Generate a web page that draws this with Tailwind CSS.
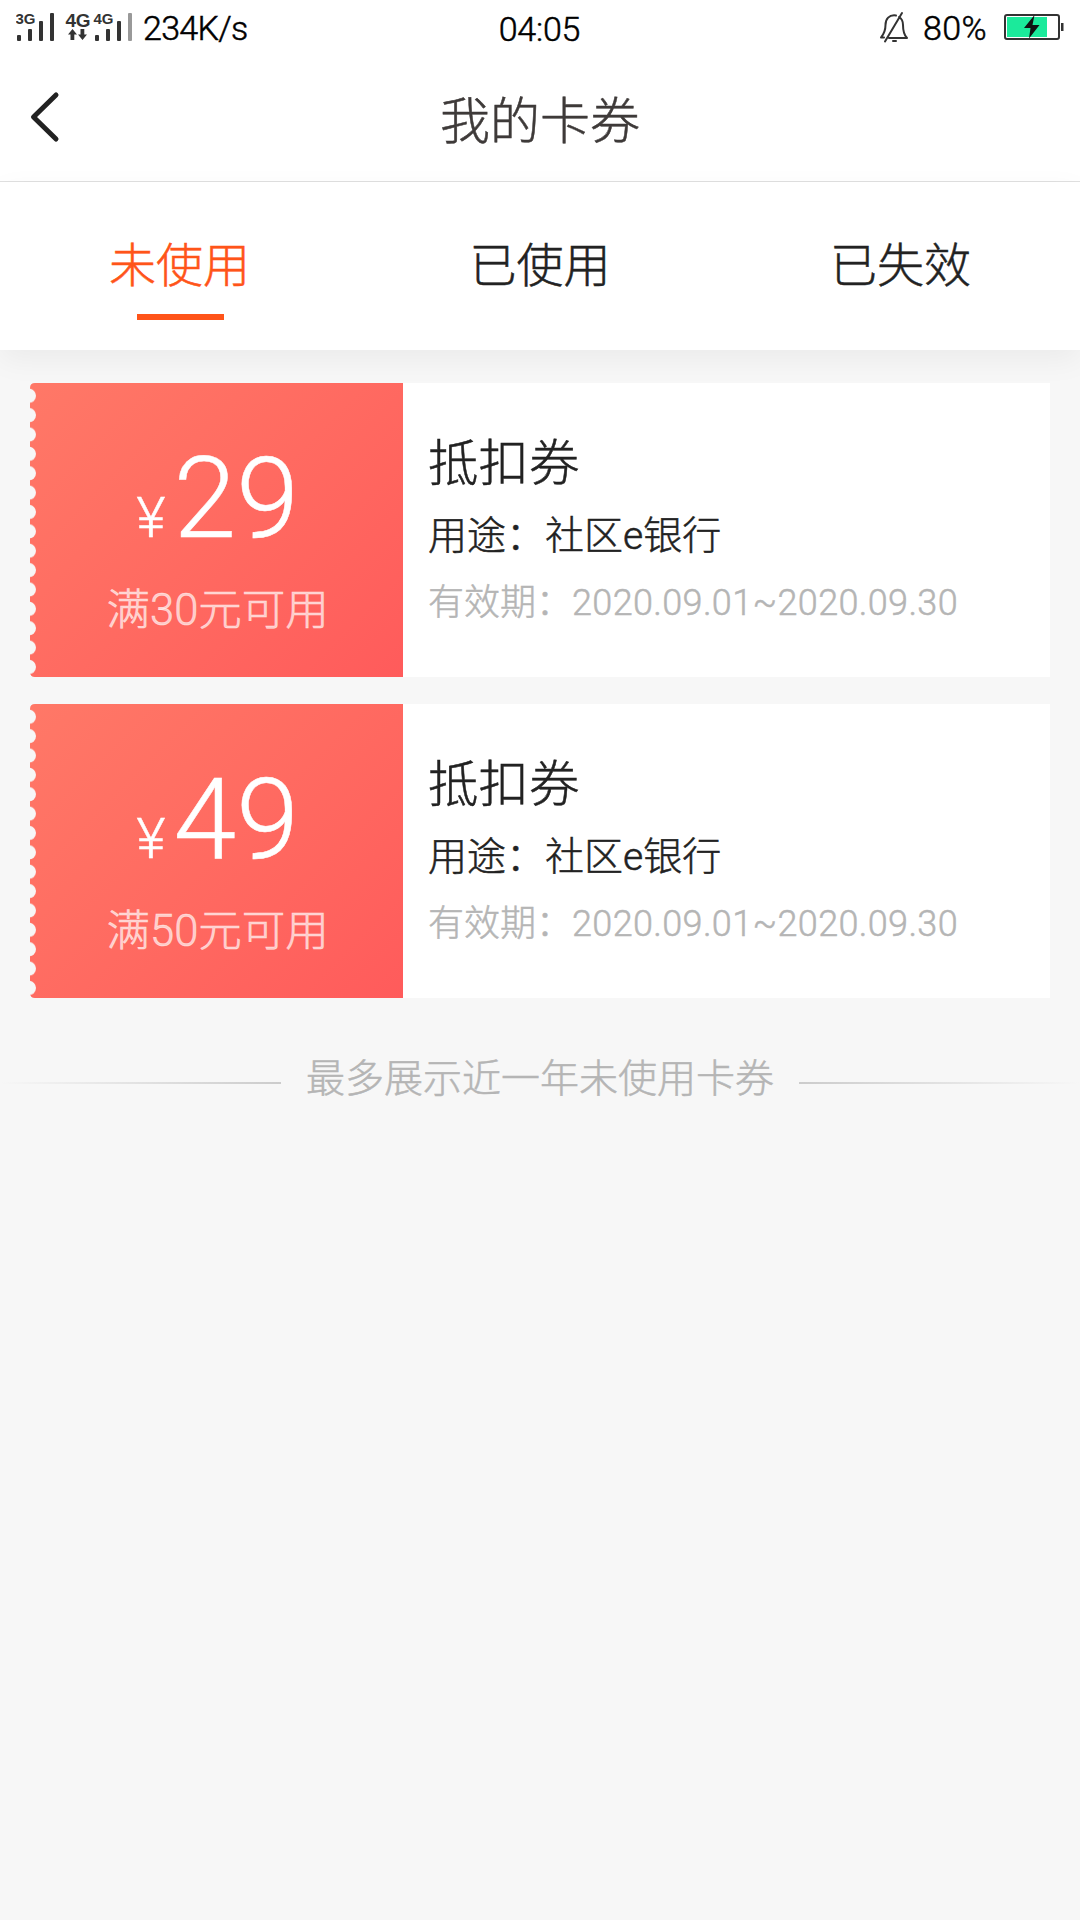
<!DOCTYPE html>
<html lang="zh-CN">
<head>
<meta charset="utf-8">
<title>我的卡券</title>
<script src="https://cdn.jsdelivr.net/npm/@tailwindcss/browser@4"></script>
</head>
<body class="w-[1080px] h-[1920px] overflow-hidden bg-[#f7f7f7] font-['Roboto','Noto_Sans_CJK_SC',sans-serif] font-light text-[#222] [-webkit-text-stroke:0.5px_currentColor]">
<div class="flex h-full flex-col">
  <header class="grid h-14 shrink-0 grid-cols-3 items-center bg-white text-[34px] leading-[52px] text-black">
    <div class="flex items-center">
      <svg class="ml-4 h-14 w-[118px] shrink-0" viewBox="16 0 118 56" fill="#333">
        <g font-family="Liberation Sans, sans-serif" font-weight="700" stroke="none" class="[-webkit-text-stroke:0]">
          <text x="15.500" y="23.500" font-size="15" textLength="20">3G</text>
          <text x="65.500" y="27" font-size="19" textLength="25">4G</text>
          <text x="93.500" y="23.500" font-size="15" textLength="20">4G</text>
        </g>
        <rect x="17" y="35" width="4" height="6" rx="1"/><rect x="28" y="29" width="4" height="12" rx="1"/><rect x="39" y="21" width="4" height="20" rx="1"/><rect x="50" y="13" width="4" height="28" rx="1"/>
        <path d="M72.500 29L77 34.500H74.300V40H70.500V34.500H68zM82.500 40L78 34.500H80.500V29H84.300V34.500H87z"/>
        <rect x="95" y="35" width="4" height="6" rx="1"/><rect x="106" y="29" width="4" height="12" rx="1"/><rect x="117" y="21" width="4" height="20" rx="1"/><rect x="128" y="13" width="4" height="28" rx="1" fill="#999"/>
      </svg>
      <span class="ml-[9px] tracking-[-0.7px]">234K/s</span>
    </div>
    <div class="pt-[1px] pr-px text-center tracking-[-0.2px]">04:05</div>
    <div class="flex items-center justify-end">
      <svg class="h-14 w-8" viewBox="878 0 32 56" fill="none" stroke="#333" stroke-width="2" stroke-linecap="round" stroke-linejoin="round">
        <path d="M895 15.500C888 14.500 884.500 19 884.500 25C884.500 32 882 35 880 37.500H883M888 38H906C903 35 902 32 902 25C902 21 900.500 18.500 898 17M884 41.500L901 13"/>
        <path d="M892 41H895"/>
      </svg>
      <span class="ml-[12px] tracking-[0.4px]">80%</span>
      <svg class="ml-4 mr-[15px] h-14 w-[62px]" viewBox="1003 0 62 56">
        <rect x="1005" y="15" width="54" height="24" rx="2" fill="#fff" stroke="#333" stroke-width="2"/>
        <rect x="1007" y="17" width="40" height="20" fill="#1bea9b"/>
        <path d="M1061 23h2.500v8h-2.500z" fill="#333"/>
        <path d="M1034.500 15L1024 28H1030.500L1029 38.500L1039.500 25H1032.500z" fill="#111"/>
      </svg>
    </div>
  </header>

  <nav class="grid h-[126px] shrink-0 grid-cols-3 items-center border-b border-[#e0e0e0] bg-white">
    <svg class="mb-[3px] ml-7 h-14 w-8" viewBox="0 0 32 56" fill="none" stroke="#222" stroke-width="5" stroke-linecap="round" stroke-linejoin="round"><path d="M28 6L5.500 28L28 50"/></svg>
    <h1 class="pt-[6px] text-center text-[50px] font-light leading-[60px] text-[#3e3a39]">我的卡券</h1>
  </nav>

  <div class="relative flex h-[168px] shrink-0 justify-between bg-white pl-[109px] pr-[109px] pt-[50px] text-[47px] leading-[68px] shadow-[0_10px_28px_rgba(0,0,0,0.05)]">
    <div class="flex flex-col items-center text-[#ff5419]"><span>未使用</span><i class="ml-[2px] mt-[14px] h-[6px] w-[87px] bg-[#ff5419]"></i></div>
    <div>已使用</div>
    <div>已失效</div>
  </div>

  <main class="flex flex-col gap-[27px] px-[30px] pt-[33px]">
    <section class="flex h-[294px] bg-white">
      <div class="relative flex w-[372.500px] shrink-0 flex-col items-center bg-linear-135 from-[#ff7867] to-[#ff5b5b] pl-[3px] text-white">
        <svg class="absolute left-0 top-0 h-[294px] w-2" viewBox="0 0 8 294" fill="#f7f7f7"><defs><pattern id="teeth" y="3" width="8" height="19.370" patternUnits="userSpaceOnUse"><circle cx="-1" cy="9.700" r="7"/></pattern></defs><rect width="8" height="294" fill="url(#teeth)"/><path d="M0 0H5Q0 0 0 5zM0 294H5Q0 294 0 289z"/></svg>
        <div class="mt-[50px] flex h-[132px] items-baseline leading-[132px]"><span class="mr-[8px] text-[56px] leading-[128px]">¥</span><span class="text-[113px]">29</span></div>
        <div class="mt-[14px] text-[43.500px] leading-[64px] text-white/65">满30元可用</div>
      </div>
      <div class="flex flex-col pl-[25.500px] pt-[45px]">
        <h2 class="text-[50.500px] font-light leading-[72px]">抵扣券</h2>
        <p class="mt-[8px] text-[39px] leading-[56px]">用途：社区e银行</p>
        <p class="mt-[13px] text-[36px] leading-[52px] text-[#b5b5b5]">有效期：<span class="tracking-[0.35px]">2020.09.01~2020.09.30</span></p>
      </div>
    </section>
    <section class="flex h-[294px] bg-white">
      <div class="relative flex w-[372.500px] shrink-0 flex-col items-center bg-linear-135 from-[#ff7867] to-[#ff5b5b] pl-[3px] text-white">
        <svg class="absolute left-0 top-0 h-[294px] w-2" viewBox="0 0 8 294" fill="#f7f7f7"><rect width="8" height="294" fill="url(#teeth)"/><path d="M0 0H5Q0 0 0 5zM0 294H5Q0 294 0 289z"/></svg>
        <div class="mt-[50px] flex h-[132px] items-baseline leading-[132px]"><span class="mr-[8px] text-[56px] leading-[128px]">¥</span><span class="text-[113px]">49</span></div>
        <div class="mt-[14px] text-[43.500px] leading-[64px] text-white/65">满50元可用</div>
      </div>
      <div class="flex flex-col pl-[25.500px] pt-[45px]">
        <h2 class="text-[50.500px] font-light leading-[72px]">抵扣券</h2>
        <p class="mt-[8px] text-[39px] leading-[56px]">用途：社区e银行</p>
        <p class="mt-[13px] text-[36px] leading-[52px] text-[#b5b5b5]">有效期：<span class="tracking-[0.35px]">2020.09.01~2020.09.30</span></p>
      </div>
    </section>
  </main>

  <footer class="mt-[51px] flex h-[60px] items-center gap-[25px] text-[39px] leading-[60px] text-[#b5b5b5]">
    <i class="mt-[7px] h-[2px] flex-1 bg-linear-to-r from-transparent to-[#ccc]"></i>
    <span>最多展示近一年未使用卡券</span>
    <i class="mt-[7px] h-[2px] flex-1 bg-linear-to-l from-transparent to-[#ccc]"></i>
  </footer>
</div>
</body>
</html>
